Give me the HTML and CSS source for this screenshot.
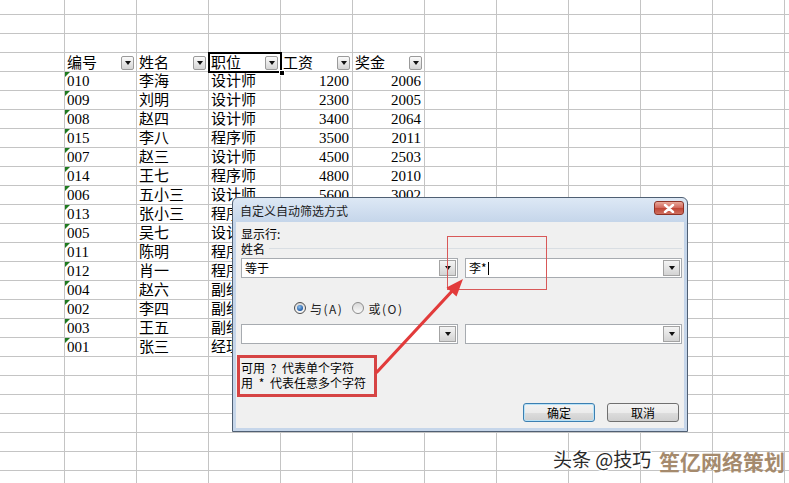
FILE: index.html
```html
<!DOCTYPE html>
<html lang="zh-CN">
<head>
  <meta charset="UTF-8">
  <meta name="viewport" content="width=device-width, initial-scale=1.0">
  <title>自定义自动筛选方式</title>
  <link rel="stylesheet" href="styles.css">
</head>
<body>

  <div class="sheet">
    <div class="table">
      <div class="cell head">编号<span class="filter"></span></div>
      <div class="cell head">姓名<span class="filter"></span></div>
      <div class="cell head active">职位<span class="filter"></span></div>
      <div class="cell head">工资<span class="filter"></span></div>
      <div class="cell head">奖金<span class="filter"></span></div>

      <div class="cell id">010</div><div class="cell">李海</div><div class="cell">设计师</div><div class="cell num">1200</div><div class="cell num">2006</div>
      <div class="cell id">009</div><div class="cell">刘明</div><div class="cell">设计师</div><div class="cell num">2300</div><div class="cell num">2005</div>
      <div class="cell id">008</div><div class="cell">赵四</div><div class="cell">设计师</div><div class="cell num">3400</div><div class="cell num">2064</div>
      <div class="cell id">015</div><div class="cell">李八</div><div class="cell">程序师</div><div class="cell num">3500</div><div class="cell num">2011</div>
      <div class="cell id">007</div><div class="cell">赵三</div><div class="cell">设计师</div><div class="cell num">4500</div><div class="cell num">2503</div>
      <div class="cell id">014</div><div class="cell">王七</div><div class="cell">程序师</div><div class="cell num">4800</div><div class="cell num">2010</div>
      <div class="cell id">006</div><div class="cell">五小三</div><div class="cell">设计师</div><div class="cell num">5600</div><div class="cell num">3002</div>
      <!-- the rows below sit under the dialog; only the first columns show -->
      <div class="cell id">013</div><div class="cell">张小三</div><div class="cell">程序师</div><div class="cell"></div><div class="cell"></div>
      <div class="cell id">005</div><div class="cell">吴七</div><div class="cell">设计师</div><div class="cell"></div><div class="cell"></div>
      <div class="cell id">011</div><div class="cell">陈明</div><div class="cell">程序师</div><div class="cell"></div><div class="cell"></div>
      <div class="cell id">012</div><div class="cell">肖一</div><div class="cell">程序师</div><div class="cell"></div><div class="cell"></div>
      <div class="cell id">004</div><div class="cell">赵六</div><div class="cell">副经理</div><div class="cell"></div><div class="cell"></div>
      <div class="cell id">002</div><div class="cell">李四</div><div class="cell">副经理</div><div class="cell"></div><div class="cell"></div>
      <div class="cell id">003</div><div class="cell">王五</div><div class="cell">副经理</div><div class="cell"></div><div class="cell"></div>
      <div class="cell id">001</div><div class="cell">张三</div><div class="cell">经理</div><div class="cell"></div><div class="cell"></div>
    </div>

    <div class="dialog">
      <div class="dialog-title">
        <span>自定义自动筛选方式</span>
        <span class="close">
          <svg width="12" height="9" viewBox="0 0 12 9"><path d="M2 1 L10 8 M10 1 L2 8" stroke="#fff" stroke-width="2.4" stroke-linecap="round"/></svg>
        </span>
      </div>

      <div class="dialog-body">
        <div class="label">显示行:</div>
        <div class="group"><span>姓名</span><span class="rule"></span></div>

        <div class="combo-row">
          <div class="combo"><span>等于</span><span class="drop"></span></div>
          <div class="combo"><span>李*<span class="caret"></span></span><span class="drop"></span></div>
        </div>

        <div class="radios">
          <span class="radio checked"></span><span class="radio-label">与(A)</span>
          <span class="radio"></span><span class="radio-label">或(O)</span>
        </div>

        <div class="combo-row second">
          <div class="combo"><span></span><span class="drop"></span></div>
          <div class="combo"><span></span><span class="drop"></span></div>
        </div>

        <div class="hint">
          可用 ? 代表单个字符<br>
          用 * 代表任意多个字符
        </div>

        <div class="actions">
          <button class="btn default">确定</button>
          <button class="btn">取消</button>
        </div>
      </div>

      <!-- annotations drawn over the dialog -->
      <div class="mark-box"></div>
      <svg class="arrow" width="100" height="105" viewBox="0 0 100 105">
        <path d="M7 97 L84 14" stroke="#e23b3b" stroke-width="3.2" stroke-linecap="round"/>
        <path d="M93 4 L86.5 21.5 L76.5 12.5 Z" fill="#e23b3b"/>
      </svg>
    </div>

    <div class="wm">头条 @技巧</div>
    <div class="brand">笙亿网络策划</div>
  </div>

</body>
</html>
```

FILE: styles.css
```css
body {
  margin: 0;
}

.sheet {
  position: relative;
  width: 789px;
  height: 483px;
  overflow: hidden;
  box-sizing: border-box;
  padding: 53px 0 0 65px;
  background-color: #fff;
  background-image:
    linear-gradient(to right, #c4c4c4 1px, transparent 1px),
    linear-gradient(to bottom, #c4c4c4 1px, transparent 1px);
  background-size: 72px 100%, 100% 19px;
  background-position: 64px 0, 0 14px;
  font-family: "Liberation Serif", "Noto Sans CJK SC", serif;
  font-size: 15px;
  color: #000;
}

.table {
  display: grid;
  grid-template-columns: repeat(5, 72px);
  grid-auto-rows: 19px;
}

.cell {
  position: relative;
  padding: 0 4px 0 2px;
  line-height: 18px;
  white-space: nowrap;
}

.num {
  text-align: right;
}

.head {
  display: flex;
  align-items: center;
  justify-content: space-between;
  padding-right: 3px;
}

.active {
  outline: 2px solid #000;
  outline-offset: -1px;
  z-index: 1;
}

.active::after {
  content: "";
  position: absolute;
  right: -4px;
  bottom: -4px;
  width: 4px;
  height: 4px;
  background: #000;
  border: 1px solid #fff;
}

.id::before {
  content: "";
  position: absolute;
  left: 0;
  top: 0;
  border-top: 5px solid #1f7a1f;
  border-right: 5px solid transparent;
}

.filter {
  display: flex;
  align-items: center;
  justify-content: center;
  width: 13px;
  height: 14px;
  box-sizing: border-box;
  border: 1px solid #9a9a9a;
  border-radius: 2px;
  background: linear-gradient(#fbfbfb, #d4d4d4);
}

.filter::before,
.drop::before {
  content: "";
  border-top: 4px solid #111;
  border-left: 3px solid transparent;
  border-right: 3px solid transparent;
}

/* dialog */

.dialog {
  position: absolute;
  left: 232px;
  top: 197px;
  width: 456px;
  height: 235px;
  box-sizing: border-box;
  display: flex;
  flex-direction: column;
  padding: 0 3px 3px;
  border: 1px solid #4f5f73;
  border-radius: 6px 6px 0 0;
  background: linear-gradient(#dde8f5, #c3d4e9 26px, #c6d6ea);
  font-family: "Noto Sans CJK SC", sans-serif;
  font-size: 12px;
  color: #000;
}

.dialog-title {
  height: 24px;
  display: flex;
  align-items: center;
  justify-content: space-between;
  padding-left: 4px;
  color: #1c1c1c;
}

.close {
  align-self: flex-start;
  margin-top: 3px;
  width: 30px;
  height: 14px;
  box-sizing: border-box;
  display: flex;
  align-items: center;
  justify-content: center;
  border: 1px solid #8e3226;
  border-radius: 3px;
  background: linear-gradient(#e9a99a, #d0655a 50%, #bf4434 51%, #cf7060);
}

.dialog-body {
  flex: 1;
  display: flex;
  flex-direction: column;
  padding: 4px 2px 0 5px;
  background: #f0f0f0;
}

.label {
  line-height: 15px;
}

.group {
  display: flex;
  align-items: center;
  height: 15px;
  line-height: 15px;
}

.rule {
  flex: 1;
  margin-left: 4px;
  border-top: 1px solid #d9dee3;
}

.combo-row {
  display: grid;
  grid-template-columns: 217px 217px;
  gap: 7px;
  margin-top: 2px;
}

.combo-row.second {
  margin-top: 8px;
}

.combo {
  height: 20px;
  box-sizing: border-box;
  display: flex;
  align-items: center;
  justify-content: space-between;
  padding-left: 3px;
  border: 1px solid #a7abb0;
  background: #fff;
  line-height: 16px;
}

.drop {
  display: flex;
  align-items: center;
  justify-content: center;
  width: 17px;
  height: 16px;
  margin-right: 1px;
  box-sizing: border-box;
  border: 1px solid #a3a3a3;
  background: linear-gradient(#f4f4f4, #d3d3d3);
}

.caret {
  display: inline-block;
  width: 1px;
  height: 13px;
  margin-left: 1px;
  vertical-align: -2px;
  background: #000;
}

.radios {
  display: flex;
  align-items: center;
  height: 16px;
  margin-top: 22px;
  padding-left: 53px;
}

.radio {
  width: 12px;
  height: 12px;
  box-sizing: border-box;
  display: flex;
  align-items: center;
  justify-content: center;
  border: 1px solid #8c8c8c;
  border-radius: 50%;
  background: linear-gradient(#d8d8d8, #fafafa);
}

.radio.checked {
  border-color: #4d4d4d;
}

.radio.checked::before {
  content: "";
  width: 6px;
  height: 6px;
  border-radius: 50%;
  background: radial-gradient(circle at 40% 35%, #8fc3f0, #1f5aa6 70%);
}

.radio-label {
  margin: 0 9px 0 4px;
  letter-spacing: 1.5px;
  color: #222;
}

.hint {
  width: 140px;
  height: 42px;
  box-sizing: border-box;
  margin: 11px 0 0 -4px;
  padding: 2px 0 0 1px;
  border: 3px solid #d64444;
  line-height: 15px;
  word-spacing: 3px;
  white-space: nowrap;
}

.actions {
  display: flex;
  justify-content: flex-end;
  gap: 12px;
  margin-top: 6px;
  padding-right: 3px;
}

.btn {
  width: 72px;
  height: 19px;
  padding: 0;
  border: 1px solid #707070;
  border-radius: 3px;
  background: linear-gradient(#f3f3f3, #ebebeb 50%, #dddddd 51%, #cfcfcf);
  font-family: "Noto Sans CJK SC", sans-serif;
  font-size: 12px;
  line-height: 17px;
  color: #000;
}

.btn.default {
  border-color: #3c7fb1;
  box-shadow: inset 0 0 0 1px #b9e2f7;
}

.mark-box {
  position: absolute;
  left: 214px;
  top: 38px;
  width: 100px;
  height: 54px;
  box-sizing: border-box;
  border: 1px solid #d85858;
}

.arrow {
  position: absolute;
  left: 137px;
  top: 77px;
}

/* watermark */

.wm {
  position: absolute;
  left: 553px;
  top: 447px;
  font-family: "Noto Sans CJK SC", sans-serif;
  font-size: 19px;
  line-height: 24px;
  color: #2a2a2a;
  text-shadow: 1px 1px 0 #fff, -1px -1px 0 #fff, 1px -1px 0 #fff, -1px 1px 0 #fff;
}

.brand {
  position: absolute;
  left: 659px;
  top: 446px;
  font-family: "Noto Sans CJK SC", sans-serif;
  font-size: 21px;
  font-weight: 700;
  line-height: 30px;
  color: #a58a6d;
}
```
